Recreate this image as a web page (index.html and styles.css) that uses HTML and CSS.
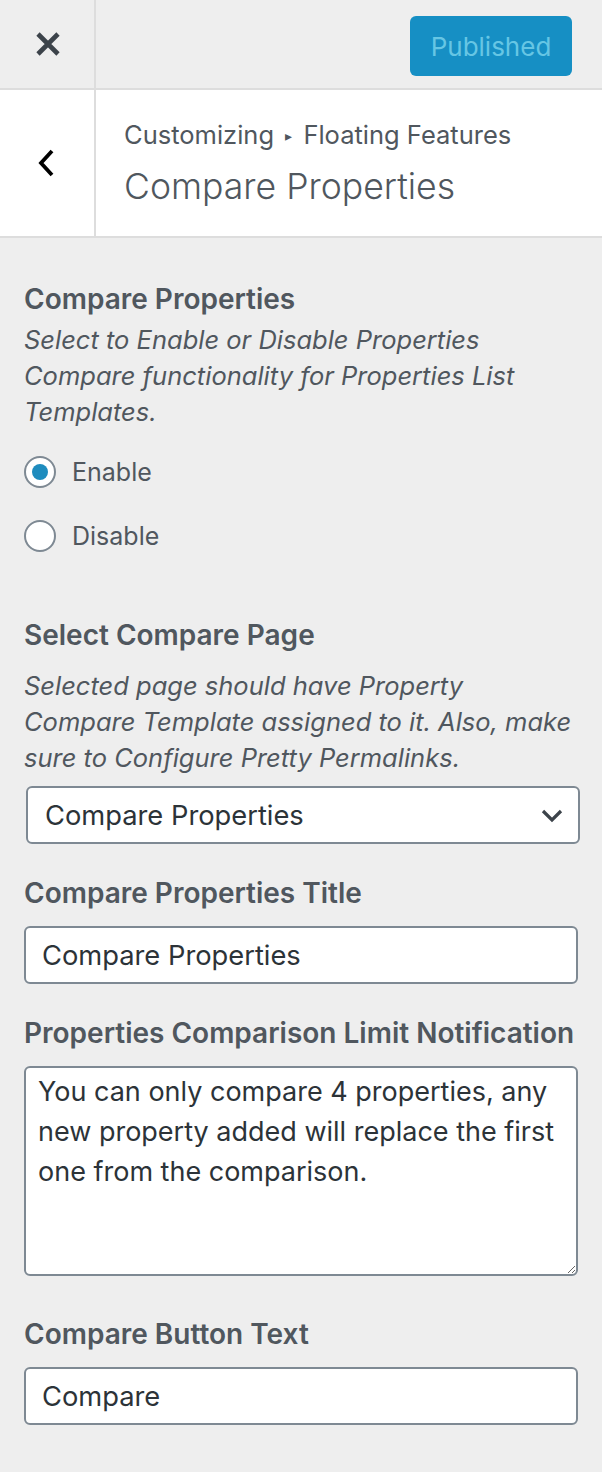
FILE: index.html
```html
<!DOCTYPE html>
<html lang="en">
<head>
<meta charset="utf-8">
<title>Customizer - Compare Properties</title>
<link rel="stylesheet" href="styles.css">
</head>
<body>
<div class="panel">
  <header class="topbar">
    <div class="close-cell">
      <svg class="icon-close" width="26" height="26" viewBox="0 0 26 26" aria-hidden="true">
        <path d="M3 3 L23 23 M23 3 L3 23" stroke="#3c434a" stroke-width="4.6" stroke-linecap="butt" fill="none"/>
      </svg>
    </div>
    <div class="topbar-actions">
      <button class="btn-published" type="button" disabled>Published</button>
    </div>
  </header>

  <section class="section-head">
    <div class="back-cell">
      <svg class="icon-back" width="20" height="30" viewBox="0 0 20 30" aria-hidden="true">
        <path d="M15 3 L4 15 L15 27" stroke="#000" stroke-width="3.8" fill="none" stroke-linejoin="miter"/>
      </svg>
    </div>
    <div class="head-titles">
      <div class="crumb">Customizing <span class="crumb-arrow">&#9656;</span> Floating Features</div>
      <h1 class="section-title">Compare Properties</h1>
    </div>
  </section>

  <main class="controls">
    <div class="control control-radio">
      <div class="ctl-title ctl-title-tight">Compare Properties</div>
      <p class="ctl-desc">Select to Enable or Disable Properties Compare functionality for Properties List Templates.</p>
      <div class="radios">
        <label class="radio-row"><span class="radio checked"></span><span>Enable</span></label>
        <label class="radio-row"><span class="radio"></span><span>Disable</span></label>
      </div>
    </div>

    <div class="control control-page">
      <div class="ctl-title ctl-title-desc">Select Compare Page</div>
      <p class="ctl-desc">Selected page should have Property Compare Template assigned to it. Also, make sure to Configure Pretty Permalinks.</p>
      <div class="select-wrap">
        <select class="field select">
          <option>Compare Properties</option>
        </select>
        <svg class="select-chevron" width="22" height="14" viewBox="0 0 22 14" aria-hidden="true">
          <path d="M2 2 L11 11 L20 2" stroke="#3c434a" stroke-width="3.2" fill="none"/>
        </svg>
      </div>
    </div>

    <div class="control">
      <div class="ctl-title">Compare Properties Title</div>
      <input class="field input" type="text" value="Compare Properties">
    </div>

    <div class="control control-area">
      <div class="ctl-title">Properties Comparison Limit Notification</div>
      <textarea class="field textarea">You can only compare 4 properties, any new property added will replace the first one from the comparison.</textarea>
    </div>

    <div class="control control-last">
      <div class="ctl-title">Compare Button Text</div>
      <input class="field input" type="text" value="Compare">
    </div>
  </main>
</div>
</body>
</html>
```

FILE: styles.css
```css
* { box-sizing: border-box; }

html, body {
  margin: 0;
  padding: 0;
  background: #eeeeee;
}

body {
  font-family: Inter, "Noto Sans", "Liberation Sans", sans-serif;
  color: #50575e;
  -webkit-font-smoothing: antialiased;
}

.panel {
  width: 602px;
  min-height: 1472px;
  background: #eeeeee;
}

/* top bar */
.topbar {
  display: flex;
  height: 90px;
  border-bottom: 2px solid #dddddd;
  background: #eeeeee;
}

.close-cell {
  width: 96px;
  border-right: 2px solid #dddddd;
  display: flex;
  align-items: center;
  justify-content: center;
}

.icon-close { display: block; margin-left: 2px; margin-top: 0; }

.topbar-actions {
  flex: 1;
  display: flex;
  align-items: flex-start;
  justify-content: flex-end;
  padding: 16px 30px 0 0;
}

.btn-published {
  width: 162px;
  height: 60px;
  border: 0;
  border-radius: 6px;
  background: #168fc4;
  color: #66c6e4;
  font-family: Inter, "Noto Sans", sans-serif;
  font-size: 26px;
  font-weight: 400;
  padding: 0;
}

/* section heading */
.section-head {
  display: flex;
  height: 148px;
  background: #ffffff;
  border-bottom: 2px solid #dddddd;
}

.back-cell {
  width: 96px;
  border-right: 2px solid #dddddd;
  display: flex;
  align-items: center;
  justify-content: center;
}

.icon-back { display: block; margin-left: 0; }

.head-titles {
  padding: 30px 0 0 28px;
}

.crumb {
  font-size: 25.5px;
  line-height: 30px;
  color: #50575e;
}

.crumb-arrow {
  font-size: 14px;
  position: relative;
  top: -3px;
  margin: 0 4px;
}

.section-title {
  margin: 10px 0 0 0;
  font-size: 35.6px;
  line-height: 46px;
  font-weight: 300;
  color: #50575e;
}

/* controls */
.controls {
  padding: 40px 24px 40px 24px;
}

.control { margin-bottom: 28px; }
.control-area { margin-bottom: 37px; }

.ctl-title {
  font-size: 28px;
  line-height: 42px;
  font-weight: 600;
  color: #50575e;
  margin-bottom: 12px;
}

.ctl-title-tight { margin-bottom: 2px; }
.ctl-title-desc { margin-bottom: 12px; }

.ctl-desc {
  margin: 0;
  font-size: 25.5px;
  line-height: 36px;
  font-style: italic;
  color: #50575e;
}

.control-radio { margin-bottom: 58px; }

.radios {
  margin-top: 22px;
  display: flex;
  flex-direction: column;
  gap: 24px;
}

.radio-row {
  display: flex;
  align-items: center;
  gap: 16px;
  height: 40px;
  font-size: 25px;
  color: #50575e;
}

.radio {
  width: 32px;
  height: 32px;
  border-radius: 50%;
  border: 2px solid #7e8993;
  background: #ffffff;
  display: flex;
  align-items: center;
  justify-content: center;
}

.radio.checked::after {
  content: "";
  width: 16px;
  height: 16px;
  border-radius: 50%;
  background: #1e8cbe;
}

.control-page .ctl-desc { margin-bottom: 10px; }

.field {
  display: block;
  width: 554px;
  border: 2px solid #7e8993;
  border-radius: 6px;
  background: #ffffff;
  font-family: Inter, "Noto Sans", "Liberation Sans", sans-serif;
  font-size: 27.3px;
  color: #2c3338;
  margin: 0;
  outline: none;
}

.select-wrap {
  position: relative;
  margin-left: 2px;
  width: 554px;
}

.select {
  height: 58px;
  padding: 0 60px 0 17px;
  -webkit-appearance: none;
  appearance: none;
}

.select-chevron {
  position: absolute;
  right: 17px;
  top: 23px;
}

.input {
  height: 58px;
  padding: 0 16px;
}

.textarea {
  height: 210px;
  padding: 4px 12px;
  font-size: 27px;
  line-height: 40px;
  resize: vertical;
}
```
